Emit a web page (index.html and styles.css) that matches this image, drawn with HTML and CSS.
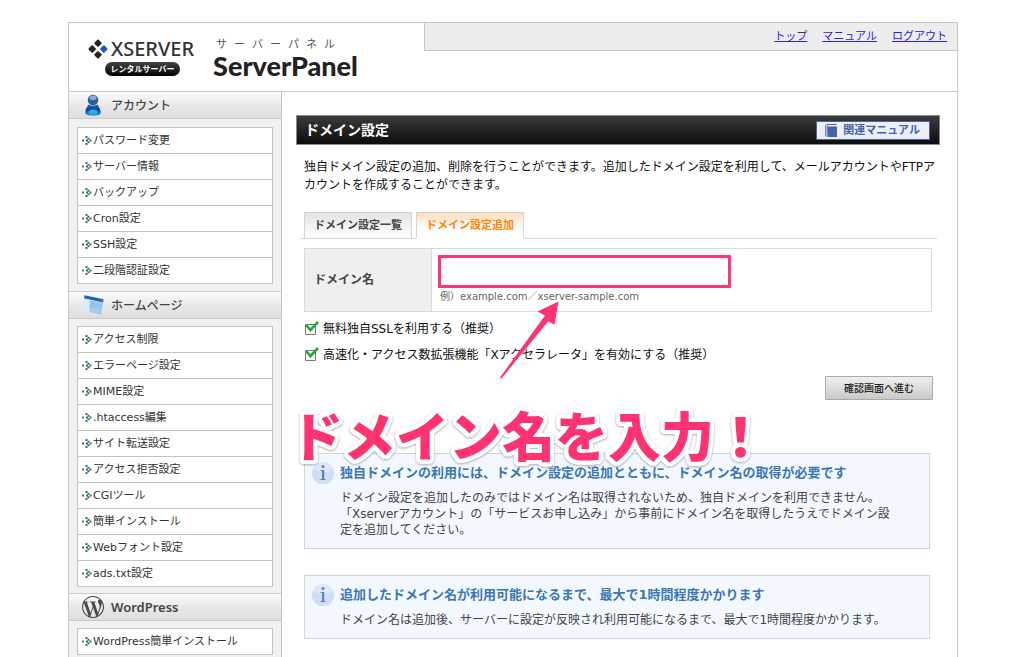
FILE: index.html
```html
<!DOCTYPE html>
<html lang="ja">
<head>
<meta charset="utf-8">
<title>ServerPanel - ドメイン設定</title>
<link rel="stylesheet" href="styles.css">
</head>
<body>
<svg class="defs" aria-hidden="true">
  <symbol id="arrow" viewBox="0 0 10 9">
    <path fill="#3c7078" d="M0 3.500h2v2h-2zM3.500 0h2v2h-2zM5.500 1.700h2v2h-2zM4 3.500h2v2h-2zM7.500 3.500h2v2h-2zM5.500 5.300h2v2h-2zM3.500 7h2v2h-2z"/>
  </symbol>
  <symbol id="info" viewBox="0 0 22 22">
    <circle cx="11" cy="11" r="11" fill="#dbe7f8"/>
    <path fill="#c5d9f3" d="M1 7a11 11 0 1 0 20 0q-10 7-20 0z" opacity=".6"/>
    <circle cx="11" cy="4.500" r="1.500" fill="#5f80b4"/>
    <path fill="#5f80b4" d="M8.500 8h3.700v9h1.300v1h-5v-1h1.500v-8h-1.500z"/>
  </symbol>
</svg>
<div class="page">
  <header class="header">
    <div class="brand">
      <div class="logo">
        <div class="logo-name">
          <svg class="logo-mark" viewBox="0 0 20 20" aria-hidden="true">
            <g stroke-linejoin="round" stroke-width="2">
              <path fill="#252525" stroke="#252525" d="M10 1.500l2.700 2.700-2.700 2.700-2.700-2.700zM4.200 7.300l2.700 2.700-2.700 2.700-2.700-2.700zM10 13.100l2.700 2.700-2.700 2.700-2.700-2.700z"/>
              <path fill="#1c5cab" stroke="#1c5cab" d="M15.800 7.300l2.700 2.700-2.700 2.700-2.700-2.700z"/>
            </g>
          </svg>
          <span>XSERVER</span>
        </div>
        <div class="logo-pill">レンタルサーバー</div>
      </div>
      <div class="product">
        <div class="product-kana">サ&nbsp; ー&nbsp; バ&nbsp; ー&nbsp; パ&nbsp; ネ&nbsp; ル</div>
        <div class="product-name">ServerPanel</div>
      </div>
    </div>
    <nav class="topnav">
      <a href="#">トップ</a>
      <a href="#">マニュアル</a>
      <a href="#">ログアウト</a>
    </nav>
  </header>
  <div class="columns">
    <aside class="sidebar">
      <section>
        <h2 class="side-head">
          <svg class="side-icon" viewBox="0 0 22 22" aria-hidden="true">
            <defs><linearGradient id="pg" x1="0" y1="0" x2="0" y2="1"><stop offset="0" stop-color="#2d62ac"/><stop offset=".5" stop-color="#0d4699"/><stop offset="1" stop-color="#2fa0e6"/></linearGradient></defs>
            <path fill="url(#pg)" d="M6.500 10.500q4.500 2.500 9 0q3 4 3.300 8q0 3.300-7.800 3.300t-7.800-3.300q.3-4 3.300-8z"/>
            <circle cx="11" cy="6" r="5.300" fill="#2b5ba3"/>
            <ellipse cx="11" cy="3.800" rx="3.600" ry="2.400" fill="#8eaad3"/>
            <ellipse cx="11" cy="18" rx="4.500" ry="2.500" fill="#35a8ee"/>
          </svg>
          アカウント
        </h2>
        <ul class="side-list">
          <li><a href="#"><svg aria-hidden="true"><use href="#arrow"/></svg>パスワード変更</a></li>
          <li><a href="#"><svg aria-hidden="true"><use href="#arrow"/></svg>サーバー情報</a></li>
          <li><a href="#"><svg aria-hidden="true"><use href="#arrow"/></svg>バックアップ</a></li>
          <li><a href="#"><svg aria-hidden="true"><use href="#arrow"/></svg>Cron設定</a></li>
          <li><a href="#"><svg aria-hidden="true"><use href="#arrow"/></svg>SSH設定</a></li>
          <li><a href="#"><svg aria-hidden="true"><use href="#arrow"/></svg>二段階認証設定</a></li>
        </ul>
      </section>
      <section>
        <h2 class="side-head">
          <svg class="side-icon" viewBox="0 0 22 22" aria-hidden="true">
            <path fill="#dcebf8" d="M2.500 1.500l19 4-1.500 16-20-5z"/>
            <path fill="#a3cdec" d="M8 6.500l12.700 2.500-1.200 12-12.500-3z"/>
            <path fill="#8ec0e8" d="M8 6.500l12.700 2.500-.6 6-12.600-2z" opacity=".6"/>
            <path fill="#1e63b4" d="M2.500 1.200l19 4-.4 3.300-19-4.300z"/>
            <path fill="#e0523e" d="M18.800 5.400l1.800.4-.2 1.600-1.800-.4z"/>
          </svg>
          ホームページ
        </h2>
        <ul class="side-list">
          <li><a href="#"><svg aria-hidden="true"><use href="#arrow"/></svg>アクセス制限</a></li>
          <li><a href="#"><svg aria-hidden="true"><use href="#arrow"/></svg>エラーページ設定</a></li>
          <li><a href="#"><svg aria-hidden="true"><use href="#arrow"/></svg>MIME設定</a></li>
          <li><a href="#"><svg aria-hidden="true"><use href="#arrow"/></svg>.htaccess編集</a></li>
          <li><a href="#"><svg aria-hidden="true"><use href="#arrow"/></svg>サイト転送設定</a></li>
          <li><a href="#"><svg aria-hidden="true"><use href="#arrow"/></svg>アクセス拒否設定</a></li>
          <li><a href="#"><svg aria-hidden="true"><use href="#arrow"/></svg>CGIツール</a></li>
          <li><a href="#"><svg aria-hidden="true"><use href="#arrow"/></svg>簡単インストール</a></li>
          <li><a href="#"><svg aria-hidden="true"><use href="#arrow"/></svg>Webフォント設定</a></li>
          <li><a href="#"><svg aria-hidden="true"><use href="#arrow"/></svg>ads.txt設定</a></li>
        </ul>
      </section>
      <section>
        <h2 class="side-head side-head-latin">
          <svg class="side-icon" viewBox="0 0 24 24" aria-hidden="true">
            <path fill="#484848" d="M21.469 6.825c.84 1.537 1.318 3.300 1.318 5.175 0 3.979-2.156 7.456-5.363 9.325l3.295-9.527c.615-1.540.820-2.771.820-3.864 0-.405-.026-.780-.070-1.110m-7.981.105c.647-.030 1.232-.105 1.232-.105.582-.075.514-.930-.067-.899 0 0-1.755.135-2.880.135-1.064 0-2.850-.150-2.850-.150-.585-.030-.661.855-.075.885 0 0 .540.061 1.125.090l1.680 4.605-2.370 7.080L5.354 6.900c.649-.030 1.234-.100 1.234-.100.585-.075.516-.930-.065-.896 0 0-1.746.138-2.874.138-.200 0-.438-.008-.690-.015C4.911 3.150 8.235 1.215 12 1.215c2.809 0 5.365 1.072 7.286 2.833-.046-.003-.091-.009-.141-.009-1.060 0-1.812.923-1.812 1.914 0 .890.513 1.643 1.060 2.531.411.720.890 1.643.890 2.977 0 .915-.354 1.994-.821 3.479l-1.075 3.585-3.900-11.610.001.014zM12 22.784c-1.059 0-2.081-.153-3.048-.437l3.237-9.406 3.315 9.087c.024.053.050.101.078.149-1.120.393-2.325.609-3.582.609M1.211 12c0-1.564.336-3.050.935-4.390L7.290 21.709C3.694 19.960 1.212 16.271 1.211 12M12 0C5.385 0 0 5.385 0 12s5.385 12 12 12 12-5.385 12-12S18.615 0 12 0"/>
          </svg>
          WordPress
        </h2>
        <ul class="side-list">
          <li><a href="#"><svg aria-hidden="true"><use href="#arrow"/></svg>WordPress簡単インストール</a></li>
        </ul>
      </section>
    </aside>
    <main class="content">
      <div class="titlebar">
        <h1>ドメイン設定</h1>
        <a class="manual" href="#">
          <svg viewBox="0 0 12 13" aria-hidden="true">
            <path fill="#4763a5" d="M2 0h9.500v1h-9v1.500h9.500v10.500h-9.500z"/>
            <path fill="#6f87bd" d="M0 1.500l1.500-1.500v13l-1.500-1z"/>
          </svg>
          関連マニュアル
        </a>
      </div>
      <div class="inner">
        <p class="intro">独自ドメイン設定の追加、削除を行うことができます。追加したドメイン設定を利用して、メールアカウントやFTPアカウントを作成することができます。</p>
        <nav class="tabs">
          <a class="tab" href="#">ドメイン設定一覧</a>
          <a class="tab tab-active" href="#">ドメイン設定追加</a>
        </nav>
        <form class="form">
          <div class="field">
            <label class="field-label" for="domain">ドメイン名</label>
            <div class="field-body">
              <input class="domain" id="domain" type="text">
              <p class="hint">例）example.com／xserver-sample.com</p>
            </div>
          </div>
          <label class="check"><input type="checkbox" checked>無料独自SSLを利用する（推奨）</label>
          <label class="check"><input type="checkbox" checked>高速化・アクセス数拡張機能「Xアクセラレータ」を有効にする（推奨）</label>
          <button class="submit" type="button">確認画面へ進む</button>
        </form>
        <section class="notice">
          <svg aria-hidden="true"><use href="#info"/></svg>
          <div>
            <h2>独自ドメインの利用には、ドメイン設定の追加とともに、ドメイン名の取得が必要です</h2>
            <p>ドメイン設定を追加したのみではドメイン名は取得されないため、独自ドメインを利用できません。「Xserverアカウント」の「サービスお申し込み」から事前にドメイン名を取得したうえでドメイン設定を追加してください。</p>
          </div>
        </section>
        <section class="notice">
          <svg aria-hidden="true"><use href="#info"/></svg>
          <div>
            <h2>追加したドメイン名が利用可能になるまで、最大で1時間程度かかります</h2>
            <p>ドメイン名は追加後、サーバーに設定が反映され利用可能になるまで、最大で1時間程度かかります。</p>
          </div>
        </section>
      </div>
      <svg class="pointer" viewBox="0 0 62 80" aria-hidden="true">
        <path fill="#ff3370" d="M59.500 .5L38.500 10.500l7.500 4L1 76.500l1.500 1L49 20.500l6.500 3z"/>
      </svg>
      <div class="callout">ドメイン名を入力！</div>
    </main>
  </div>
</div>
</body>
</html>
```
FILE: styles.css
```css
* { box-sizing: border-box; }

body {
  margin: 0;
  padding: 22px 66px 0 68px;
  background: #fff;
  color: #111;
  font: 12px/18px "DejaVu Sans", "Noto Sans CJK JP", sans-serif;
}

h1, h2, p, ul { margin: 0; padding: 0; }
ul { list-style: none; }
svg { display: block; flex: none; }
.defs { position: absolute; width: 0; height: 0; }

.page { border: 1px solid #c6c6c6; border-bottom: 0; }

/* Header */
.header {
  display: flex;
  align-items: flex-start;
  height: 69px;
  border-bottom: 1px solid #ccc;
}
.brand {
  display: flex;
  flex: none;
  width: 40%;
  gap: 19px;
  padding: 14px 0 0 19px;
}
.topnav {
  display: flex;
  flex: 1;
  justify-content: flex-end;
  gap: 15px;
  padding: 4px 10px;
  border: solid #c6c6c6;
  border-width: 0 0 1px 1px;
  background: #ededed;
  font-size: 11px;
  line-height: 19px;
}
.topnav a { color: #2a20dd; }

.logo-name {
  display: flex;
  align-items: center;
  gap: 3px;
  color: #333;
  font: 500 20px/24px "Noto Sans", sans-serif;
}
.logo-mark { width: 20px; height: 20px; }
.logo-pill {
  width: 75px;
  margin: 1px 0 0 17px;
  border-radius: 7px;
  background: linear-gradient(#444, #000);
  color: #fff;
  font: 700 8px/14px "Noto Sans CJK JP", sans-serif;
  text-align: center;
}
.product-kana {
  padding-left: 3px;
  color: #555;
  font-size: 11px;
  line-height: 16px;
}
.product-name {
  color: #222;
  font: 900 27px/26px Lato, "Noto Sans", sans-serif;
}

/* Sidebar */
.columns { display: flex; }
.sidebar {
  flex: none;
  width: 213px;
  border-right: 1px solid #c3c3c3;
  background: #f1f1f1;
}
.side-head {
  display: flex;
  align-items: center;
  gap: 7px;
  height: 28px;
  padding-left: 13px;
  border: solid #c9c9c9;
  border-width: 1px 0;
  background: linear-gradient(#fcfcfc, #e9e9e9 50%, #dedede);
  color: #444;
  font: 500 12px/26px "Noto Sans CJK JP", sans-serif;
}
.side-head-latin { font: 600 13px/26px "Noto Sans", sans-serif; }
.sidebar section:first-child .side-head { height: 27px; border-top: 0; }
.side-icon { width: 22px; height: 22px; }
.side-list {
  margin: 7px 8px 6px;
  border: 1px solid #c3c3c3;
  border-bottom: 0;
  background: #fff;
}
.sidebar section:first-child .side-list { margin: 8px 8px 7px; }
.side-list li { border-bottom: 1px solid #c3c3c3; }
.side-list a {
  display: flex;
  align-items: center;
  gap: 1px;
  padding-left: 4px;
  color: #333;
  font-size: 11px;
  line-height: 25px;
  text-decoration: none;
}
.side-list svg { width: 10px; height: 9px; }

/* Content */
.content {
  position: relative;
  flex: 1;
  min-width: 0;
  padding: 23px 17px 19px 14px;
}
.titlebar {
  display: flex;
  align-items: center;
  justify-content: space-between;
  height: 30px;
  padding: 0 9px 0 8px;
  border: 1px solid #888;
  background: linear-gradient(#3b3b3b, #0c0c0c);
}
.titlebar h1 { color: #fff; font-size: 14px; line-height: 28px; }
.manual {
  display: flex;
  align-items: center;
  gap: 6px;
  padding: 0 9px 0 8px;
  border: 1px solid #4965a7;
  background: #e9eef9;
  color: #4763a5;
  font-size: 11px;
  font-weight: 700;
  line-height: 17px;
  text-decoration: none;
}
.manual svg { width: 12px; height: 13px; }

.inner { padding: 13px 0 0 8px; }
.intro { line-height: 18px; }
.tabs {
  display: flex;
  gap: 4px;
  margin: 18px 3px 9px -4px;
  padding-left: 4px;
  border-bottom: 1px solid #d8d8d8;
}
.tab {
  padding: 0 9px;
  margin-bottom: -1px;
  border: 1px solid #d5d5d5;
  background: linear-gradient(#e4e4e4, #fff);
  color: #444;
  font-size: 11px;
  font-weight: 700;
  line-height: 25px;
  text-decoration: none;
}
.tab-active {
  border-bottom-color: #fff;
  background: linear-gradient(#fddcb8, #fff 60%);
  color: #ff8200;
}

.form { display: flex; flex-direction: column; margin-right: 8px; }
.field { display: flex; border: 1px solid #d9d9d9; }
.field-label {
  display: flex;
  align-items: center;
  width: 127px;
  padding-left: 9px;
  border-right: 1px solid #d9d9d9;
  background: #efefef;
  color: #444;
  font-weight: 700;
}
.field-body { padding: 6px; }
.domain {
  display: block;
  width: 293px;
  height: 33px;
  padding: 0 8px;
  border: 3px solid #ff3370;
  border-radius: 1px;
  background: #fff;
  font: inherit;
}
.hint {
  padding-left: 2px;
  color: #666;
  font-size: 10px;
  line-height: 17px;
}
.check {
  display: flex;
  align-items: center;
  gap: 3px;
  height: 26px;
}
.field + .check { margin-top: 4px; }
.check input {
  width: 16px;
  height: 16px;
  margin: 0;
  appearance: none;
  background: url("data:image/svg+xml,%3Csvg xmlns='http://www.w3.org/2000/svg' viewBox='0 0 16 16'%3E%3Cpath fill='%23fff' stroke='%23777' d='M1.500 3.500h10v10h-10z'/%3E%3Cpath fill='none' stroke='%2320a83c' stroke-width='2.600' d='M2 4l4.500 5 7.500-8'/%3E%3C/svg%3E") no-repeat;
}
.submit {
  align-self: flex-end;
  margin: 8px -1px 0 0;
  padding: 0 18px;
  border: 1px solid #aaa;
  border-radius: 1px;
  background: linear-gradient(#f0f0f0, #c9c9c9);
  color: #222;
  font: 500 10px/22px "Noto Sans CJK JP", sans-serif;
}

.notice {
  display: flex;
  gap: 6px;
  margin: 26px 10px 0 0;
  padding: 8px 7px 6px;
  border: 1px solid #d2d6da;
  background: #f3f8ff;
}
.form + .notice { margin-top: 53px; }
.notice svg { width: 22px; height: 22px; }
.notice h2 { color: #3a77b3; font-size: 13px; line-height: 22px; }
.notice p {
  padding: 6px 28px 4px 0;
  color: #444;
  line-height: 16px;
}

/* Annotation over the form */
.pointer {
  position: absolute;
  top: 209px;
  left: 217px;
  width: 62px;
  height: 80px;
}
.callout {
  position: absolute;
  top: 315px;
  left: 8px;
  color: #ff3370;
  font: 900 53px/54px "Noto Sans CJK JP", sans-serif;
  white-space: nowrap;
  text-shadow:
    4px 0 #fff, -4px 0 #fff, 0 4px #fff, 0 -4px #fff,
    3px 3px #fff, -3px 3px #fff, 3px -3px #fff, -3px -3px #fff,
    4px 2px #fff, -4px 2px #fff, 4px -2px #fff, -4px -2px #fff,
    2px 4px #fff, -2px 4px #fff, 2px -4px #fff, -2px -4px #fff;
  filter: drop-shadow(0 1px 1px #aaa);
  pointer-events: none;
}
```
